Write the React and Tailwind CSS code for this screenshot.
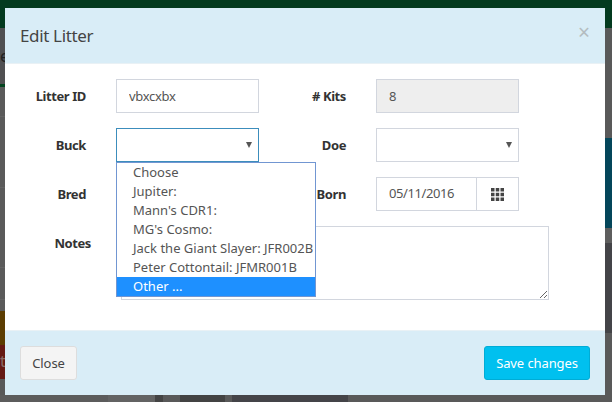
import React from 'react';

const fontStack = { fontFamily: '"Noto Sans", sans-serif' };

const options = [
  'Choose',
  'Jupiter:',
  "Mann's CDR1:",
  "MG's Cosmo:",
  'Jack the Giant Slayer: JFR002B',
  'Peter Cottontail: JFMR001B',
];

const Label = ({ children, className = '' }) => (
  <label className={`shrink-0 text-right text-[13px] font-bold leading-[34px] tracking-[-0.4px] text-[#333] ${className}`}>
    {children}
  </label>
);

const FakeSelect = ({ focused }) => (
  <div className={`flex h-[34px] w-[143px] items-center justify-end border bg-white pr-[6px] ${focused ? 'border-[#3c8dbc]' : 'border-[#d2d6de]'}`}>
    <svg width="6" height="6" viewBox="0 0 6 6">
      <path d="M0 0h6L3 6z" fill="#555" />
    </svg>
  </div>
);

const ThIcon = () => (
  <svg width="13" height="13" viewBox="0 0 13 13" fill="#444">
    <rect x="0" y="0" width="3.5" height="3.5" />
    <rect x="4.75" y="0" width="3.5" height="3.5" />
    <rect x="9.5" y="0" width="3.5" height="3.5" />
    <rect x="0" y="4.75" width="3.5" height="3.5" />
    <rect x="4.75" y="4.75" width="3.5" height="3.5" />
    <rect x="9.5" y="4.75" width="3.5" height="3.5" />
    <rect x="0" y="9.5" width="3.5" height="3.5" />
    <rect x="4.75" y="9.5" width="3.5" height="3.5" />
    <rect x="9.5" y="9.5" width="3.5" height="3.5" />
  </svg>
);

const Backdrop = () => (
  <div className="flex h-full flex-col">
    <div className="h-[28px] shrink-0 bg-[#033a1f]" />
    <div className="flex flex-1 justify-between">
      {/* left strip */}
      <div className="flex w-[5px] flex-col overflow-hidden">
        <div className="h-[56px] bg-[#505052] pt-[20px] text-[16px] leading-[16px] text-[#222]">e</div>
        <div className="h-[3px] bg-[#03441f]" />
        <div className="h-[30px] border-b border-[#636363] bg-[#5a5a5a]" />
        <div className="h-[71px] border-b border-[#636363] bg-[#5a5a5a]" />
        <div className="h-[80px] border-b border-[#636363] bg-[#5a5a5a]" />
        <div className="h-[32px] border-b border-[#636363] bg-[#5a5a5a]" />
        <div className="h-[11px] bg-[#5a5a5a]" />
        <div className="h-[34px] bg-[#5c3d02]" />
        <div className="h-[34px] bg-[#651a14] pt-[8px] text-[16px] leading-[16px] text-[#8a6a66]">t</div>
        <div className="flex-1 bg-[#595959]" />
      </div>
      {/* right strip */}
      <div className="flex w-[7px] flex-col">
        <div className="h-[110px] bg-[#595959]" />
        <div className="h-[90px] bg-[#04465a]" />
        <div className="h-[15px] bg-[#5e5e5e]" />
        <div className="h-[90px] bg-[#444448]" />
        <div className="flex-1 bg-[#595959]" />
      </div>
    </div>
    {/* bottom strip */}
    <div className="flex h-[7px] shrink-0">
      <div className="w-[108px] bg-[#5c5c5c]" />
      <div className="w-[47px] bg-[#636363]" />
      <div className="w-[8px] bg-[#444]" />
      <div className="w-[17px] bg-[#595959]" />
      <div className="w-[45px] bg-[#434343]" />
      <div className="w-[7px] bg-[#595959]" />
      <div className="w-[116px] bg-[#444448]" />
      <div className="flex-1 bg-[#595959]" />
    </div>
  </div>
);

const App = () => {
  return (
    <div className="relative h-[402px] w-[612px] overflow-hidden bg-[#595959]" style={fontStack}>
      <Backdrop />

      {/* Modal */}
      <div className="absolute top-[8px] left-[5px] flex h-[387px] w-[600px] flex-col bg-white">
        <div className="flex h-[56px] shrink-0 items-start justify-between border-b border-[#e9f1f5] bg-[#d9edf7] px-[15px]">
          <h4 className="pt-[15px] text-[17px] leading-[26px] font-normal tracking-[-0.35px] text-[#444]">Edit Litter</h4>
          <span className="pt-[11px] text-[21px] leading-[26px] font-normal text-[#b4bcc0]">×</span>
        </div>

        <div className="relative flex flex-1 flex-col gap-[15px] pt-[15px]">
          <div className="flex">
            <Label className="w-[81px]">Litter ID</Label>
            <input
              readOnly
              value="vbxcxbx"
              className="ml-[30px] h-[34px] w-[143px] border border-[#d2d6de] bg-white px-[12px] text-[13px] tracking-[-0.3px] text-[#555]"
            />
            <Label className="w-[87px]"># Kits</Label>
            <input
              readOnly
              value="8"
              className="ml-[30px] h-[34px] w-[143px] border border-[#d2d6de] bg-[#eee] px-[12px] text-[13px] text-[#555]"
            />
          </div>

          <div className="flex">
            <Label className="w-[81px]">Buck</Label>
            <div className="relative ml-[30px]">
              <FakeSelect focused />
              {/* open dropdown */}
              <ul className="absolute top-[34px] left-0 z-10 w-[200px] border border-[#7196d2] bg-white text-[13px] leading-[19px] text-[#555]">
                {options.map((name) => (
                  <li key={name} className="h-[19px] pl-[16px] whitespace-nowrap">{name}</li>
                ))}
                <li className="h-[19px] bg-[#1e90ff] pl-[16px] text-white">Other ...</li>
              </ul>
            </div>
            <Label className="w-[87px]">Doe</Label>
            <div className="ml-[30px]">
              <FakeSelect />
            </div>
          </div>

          <div className="flex">
            <Label className="w-[81px]">Bred</Label>
            <div className="ml-[30px] h-[34px] w-[143px]" />
            <Label className="w-[87px]">Born</Label>
            <div className="ml-[30px] flex h-[34px] w-[143px] border border-[#d2d6de]">
              <input
                readOnly
                value="05/11/2016"
                className="w-[100px] border-r border-[#d2d6de] bg-white px-[12px] text-[13px] tracking-[-0.4px] text-[#555]"
              />
              <div className="flex flex-1 items-center justify-center">
                <ThIcon />
              </div>
            </div>
          </div>

          <div className="flex">
            <Label className="w-[86px]">Notes</Label>
            <textarea
              readOnly
              className="ml-[30px] h-[74px] w-[428px] resize border border-[#d2d6de] bg-white"
            />
          </div>
        </div>

        <div className="flex h-[65px] shrink-0 items-start justify-between border-t border-[#e9f1f5] bg-[#d9edf7] px-[15px] pt-[15px]">
          <button className="h-[34px] w-[57px] rounded-[3px] border border-[#ddd] bg-[#f4f4f4] pt-[1px] text-[13px] tracking-[-0.1px] text-[#444]">Close</button>
          <button className="h-[34px] w-[106px] rounded-[3px] border border-[#00acd6] bg-[#00c0ef] pt-[1px] text-[13px] tracking-[-0.1px] text-white">Save changes</button>
        </div>
      </div>
    </div>
  );
};

export default App;
